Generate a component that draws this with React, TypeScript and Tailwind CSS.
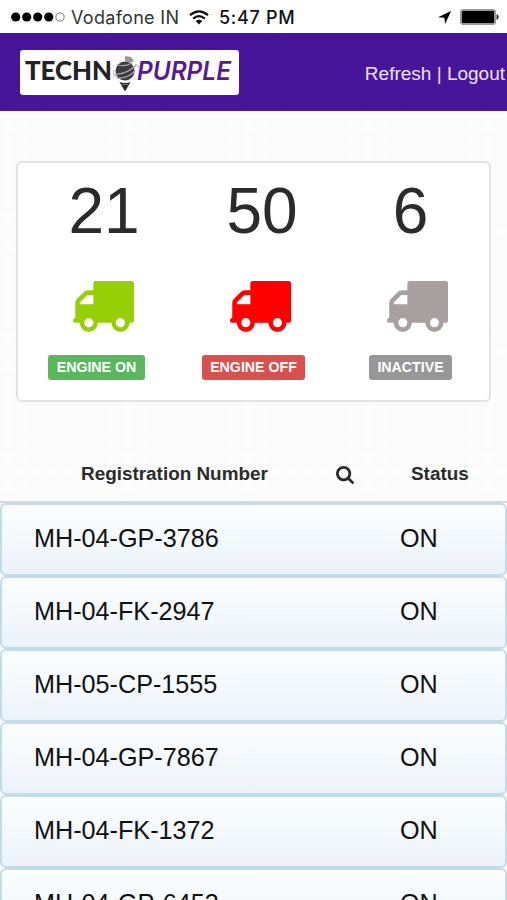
import React from "react";

const stats = [
  { count: "21", label: "ENGINE ON", icon: "text-[#96cf05]", badge: "bg-[#5bb75d]", shift: "pl-[15px]" },
  { count: "50", label: "ENGINE OFF", icon: "text-[#fe0000]", badge: "bg-[#d8514e]", shift: "pl-[17px]" },
  { count: "6", label: "INACTIVE", icon: "text-[#a89f9f]", badge: "bg-[#979797]", shift: "" },
];

const vehicles = [
  { number: "MH-04-GP-3786", status: "ON" },
  { number: "MH-04-FK-2947", status: "ON" },
  { number: "MH-05-CP-1555", status: "ON" },
  { number: "MH-04-GP-7867", status: "ON" },
  { number: "MH-04-FK-1372", status: "ON" },
  { number: "MH-04-GP-6453", status: "ON" },
];

const TruckIcon = ({ className }: { className: string }) => (
  <svg viewBox="64 256 1728 1408" preserveAspectRatio="none" className={className} fill="currentColor">
    <path d="M640 1408q0-52-38-90t-90-38-90 38-38 90 38 90 90 38 90-38 38-90zm-384-512h384v-256h-158q-13 0-22 9l-195 195q-9 9-9 22v30zm1280 512q0-52-38-90t-90-38-90 38-38 90 38 90 90 38 90-38 38-90zm256-1088v1024q0 15-4 26.5t-13.5 18.5-16.5 11.5-23.5 6-22.5 2-25.5 0-22.5-.5q0 106-75 181t-181 75-181-75-75-181h-384q0 106-75 181t-181 75-181-75-75-181h-64q-3 0-22.5.5t-25.5 0-22.5-2-23.5-6-16.5-11.5-13.5-18.5-4-26.5q0-26 19-45t45-19v-320q0-8-.5-35t0-38 2.5-34.5 6.5-37 14-30.5 22.5-30l198-198q19-19 50.5-32t58.5-13h160v-192q0-26 19-45t45-19h1024q26 0 45 19t19 45z" />
  </svg>
);

const SearchIcon = () => (
  <svg viewBox="64 128 1664 1664" className="h-[18px] w-[18px]" fill="currentColor">
    <path d="M1216 832q0-185-131.5-316.5t-316.5-131.5-316.5 131.5-131.5 316.5 131.5 316.5 316.5 131.5 316.5-131.5 131.5-316.5zm512 832q0 52-38 90t-90 38q-54 0-90-38l-343-342q-179 124-399 124-143 0-273.5-55.5t-225-150-150-225-55.5-273.5 55.5-273.5 150-225 225-150 273.5-55.5 273.5 55.5 225 150 150 225 55.5 273.5q0 220-124 399l343 343q37 37 37 90z" />
  </svg>
);

const Logo = () => (
  <svg width="219" height="45" viewBox="0 0 219 45" className="rounded-[3px] bg-white">
    <g fontSize="26">
      <text x="5" y="30" fill="#222124" fontFamily="Lato, sans-serif" fontWeight="900" textLength="87" lengthAdjust="spacingAndGlyphs">
        TECHN
      </text>
      <text x="117" y="30" fill="#571a91" fontFamily="Inter, sans-serif" fontWeight="600" fontStyle="italic" textLength="94" lengthAdjust="spacingAndGlyphs">
        PURPLE
      </text>
    </g>
    <circle cx="105" cy="21" r="9.5" fill="#3d3d40" />
    <path d="M95 24q11 1 21-9M97 28q10 1 18-7M98 15q7 2 14-2" stroke="#a4a2a8" strokeWidth="1.3" fill="none" />
    <path d="M94 20q-2 6 4 8M115 15q4-1 3 3" stroke="#b9a8cd" strokeWidth="1" fill="none" />
    <path d="M105 6l6 1 3 4-4 2-5-2z" fill="#99979a" />
    <path d="M99.500 32q5.500 2 11 0L105 41.500z" fill="#29282b" />
    <path d="M102 34.500h6" stroke="#77757a" strokeWidth="1" />
  </svg>
);

const StatusBar = () => (
  <div className="flex h-[33px] shrink-0 items-center bg-white pl-[11px] pr-[8px] pt-[1px] font-[Inter,sans-serif] text-[18px] text-[#111]">
    <svg width="54" height="10" viewBox="0 0 54 10">
      <circle cx="4.700" cy="5" r="4.600" />
      <circle cx="15.700" cy="5" r="4.600" />
      <circle cx="26.700" cy="5" r="4.600" />
      <circle cx="37.700" cy="5" r="4.600" />
      <circle cx="49" cy="5" r="4.100" fill="none" stroke="#777" strokeWidth="1" />
    </svg>
    <span className="ml-[6px] w-[109px] whitespace-nowrap tracking-[0.3px] text-[#333]">Vodafone IN</span>
    <svg width="20" height="15" viewBox="0 0 20 15" className="ml-[9px]" fill="none" stroke="#111" strokeWidth="2.200">
      <path d="M1 5.200Q10-2.600 19 5.200M4.200 8.700Q10 3.700 15.800 8.700" />
      <path d="M10 14.500L6.600 11.100Q10 8.200 13.400 11.100z" fill="#111" stroke="none" />
    </svg>
    <span className="ml-[10px] whitespace-nowrap font-medium tracking-[0.7px]">5:47 PM</span>
    <svg width="13" height="13" viewBox="0 0 13 13" className="ml-auto">
      <path d="M13 0L7.200 13L6.300 6.700L0 6.200z" />
    </svg>
    <svg width="39" height="16" viewBox="0 0 39 16" className="ml-[9px]">
      <rect x=".7" y=".7" width="34.600" height="14.600" rx="2.500" fill="#999" stroke="#999" strokeWidth="1.400" />
      <rect x="2" y="2" width="32" height="12" rx="1" />
      <path d="M36.500 5q2.300 1 2.300 3t-2.300 3z" fill="#333" />
    </svg>
  </div>
);

export default function App() {
  return (
    <div className="flex h-[900px] w-[507px] flex-col overflow-hidden bg-[#fcfcfc] bg-[repeating-linear-gradient(0deg,#f7f7f780_0_1px,transparent_1px_15px),repeating-linear-gradient(90deg,#f7f7f780_0_1px,transparent_1px_15px)] font-['Liberation_Sans',Arial,sans-serif] text-[#2b2b2b]">
      <StatusBar />
      <header className="flex h-[78px] shrink-0 items-center justify-between bg-[#471599] pl-[20px] pr-[2px]">
        <Logo />
        <div className="mt-[4px] whitespace-nowrap text-[19px] text-[#eee6ff]">Refresh | Logout</div>
      </header>

      <section className="mx-[16px] mt-[50px] grid h-[241px] shrink-0 grid-cols-3 rounded-[6px] border-2 border-[#e2e2e2] bg-white">
        {stats.map((stat) => (
          <div key={stat.label} className="flex flex-col items-center">
            <div className={`mt-[16px] h-[65px] text-[64px] leading-[65px] ${stat.shift}`}>{stat.count}</div>
            <div className="mt-[37px] pl-[13px]">
              <TruckIcon className={`h-[51px] w-[61px] ${stat.icon}`} />
            </div>
            <span className={`mt-[23px] flex h-[25px] items-center rounded-[3px] px-[8.500px] pt-px text-[14.200px] font-bold text-white ${stat.badge}`}>
              {stat.label}
            </span>
          </div>
        ))}
      </section>

      <div className="mt-[43px] flex h-[58px] shrink-0 items-center border-b-2 border-[#d9d9dc] pl-[81px] pt-[3px] text-[18.900px] font-bold">
        <span className="w-[255px]">Registration Number</span>
        <SearchIcon />
        <span className="ml-[57px]">Status</span>
      </div>

      <ul className="flex flex-col">
        {vehicles.map((vehicle) => (
          <li
            key={vehicle.number}
            className="flex h-[73px] shrink-0 items-center rounded-[6px] border-2 border-[#c3dcea] bg-linear-to-b from-[#fcfeff] to-[#ebf3f9] pb-px pl-[32px] text-[25.200px] text-[#111]"
          >
            <span className="w-[366px]">{vehicle.number}</span>
            <span>{vehicle.status}</span>
          </li>
        ))}
      </ul>
    </div>
  );
}
